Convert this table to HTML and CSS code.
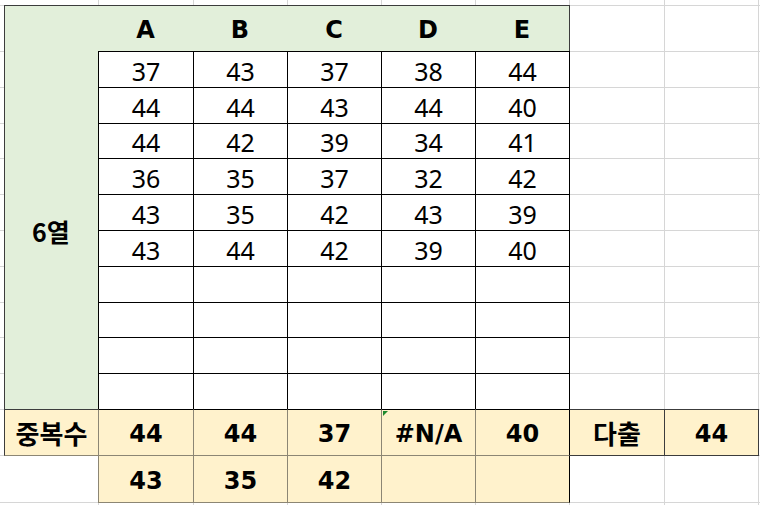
FILE: index.html
```html
<!DOCTYPE html>
<html lang="ko">
<head>
<meta charset="utf-8">
<title>6열 중복수</title>
<link rel="stylesheet" href="styles.css">
</head>
<body>
<div class="sheet">
  <div class="green"></div>
  <div class="colhead c-a">A</div>
  <div class="colhead c-b">B</div>
  <div class="colhead c-c">C</div>
  <div class="colhead c-d">D</div>
  <div class="colhead c-e">E</div>
  <div class="rowhead">6열</div>

  <div class="data">
    <div class="cell">37</div><div class="cell">43</div><div class="cell">37</div><div class="cell">38</div><div class="cell">44</div>
    <div class="cell">44</div><div class="cell">44</div><div class="cell">43</div><div class="cell">44</div><div class="cell">40</div>
    <div class="cell">44</div><div class="cell">42</div><div class="cell">39</div><div class="cell">34</div><div class="cell">41</div>
    <div class="cell">36</div><div class="cell">35</div><div class="cell">37</div><div class="cell">32</div><div class="cell">42</div>
    <div class="cell">43</div><div class="cell">35</div><div class="cell">42</div><div class="cell">43</div><div class="cell">39</div>
    <div class="cell">43</div><div class="cell">44</div><div class="cell">42</div><div class="cell">39</div><div class="cell">40</div>
    <div class="cell"></div><div class="cell"></div><div class="cell"></div><div class="cell"></div><div class="cell"></div>
    <div class="cell"></div><div class="cell"></div><div class="cell"></div><div class="cell"></div><div class="cell"></div>
    <div class="cell"></div><div class="cell"></div><div class="cell"></div><div class="cell"></div><div class="cell"></div>
    <div class="cell"></div><div class="cell"></div><div class="cell"></div><div class="cell"></div><div class="cell"></div>
  </div>

  <div class="sum sum-label">중복수</div>
  <div class="sum sum-val c-a">44</div>
  <div class="sum sum-val c-b">44</div>
  <div class="sum sum-val c-c">37</div>
  <div class="sum sum-val c-d sum-na">#N/A</div>
  <div class="sum sum-val c-e">40</div>
  <div class="sum sum-most">다출</div>
  <div class="sum sum-most-val">44</div>

  <div class="sum2 c-a">43</div>
  <div class="sum2 c-b">35</div>
  <div class="sum2 c-c">42</div>
  <div class="sum2 c-d"></div>
  <div class="sum2 c-e sum2-last"></div>
</div>
</body>
</html>
```

FILE: styles.css
```css
html, body {
  margin: 0;
  padding: 0;
  background: #fff;
}

.sheet {
  width: 760px;
  height: 505px;
  overflow: hidden;
  display: grid;
  grid-template-columns: 4px 94px 95px 94px 94px 94px 94px 95px 94px 1fr;
  grid-template-rows: 5px 46px 36px 36px 35px 36px 36px 36px 36px 35px 36px 36px 46px 47px 1fr;
  color: #000;
  font-family: "Noto Sans", "Noto Sans CJK KR", sans-serif;
  background-color: #fff;
  background-repeat: no-repeat;
  background-image:
    linear-gradient(#d6d6d6, #d6d6d6), linear-gradient(#d6d6d6, #d6d6d6),
    linear-gradient(#d6d6d6, #d6d6d6), linear-gradient(#d6d6d6, #d6d6d6),
    linear-gradient(#d6d6d6, #d6d6d6), linear-gradient(#d6d6d6, #d6d6d6),
    linear-gradient(#d6d6d6, #d6d6d6), linear-gradient(#d6d6d6, #d6d6d6),
    linear-gradient(#d6d6d6, #d6d6d6), linear-gradient(#d6d6d6, #d6d6d6),
    linear-gradient(#d6d6d6, #d6d6d6), linear-gradient(#d6d6d6, #d6d6d6),
    linear-gradient(#d6d6d6, #d6d6d6), linear-gradient(#d6d6d6, #d6d6d6),
    linear-gradient(#d6d6d6, #d6d6d6), linear-gradient(#d6d6d6, #d6d6d6),
    linear-gradient(#d6d6d6, #d6d6d6), linear-gradient(#d6d6d6, #d6d6d6),
    linear-gradient(#d6d6d6, #d6d6d6), linear-gradient(#d6d6d6, #d6d6d6),
    linear-gradient(#d6d6d6, #d6d6d6), linear-gradient(#d6d6d6, #d6d6d6);
  background-size:
    1px 100%, 1px 100%, 1px 100%, 1px 100%, 1px 100%, 1px 100%, 1px 100%, 1px 100%,
    100% 1px, 100% 1px, 100% 1px, 100% 1px, 100% 1px, 100% 1px, 100% 1px,
    100% 1px, 100% 1px, 100% 1px, 100% 1px, 100% 1px, 100% 1px, 100% 1px;
  background-position:
    98px 0, 193px 0, 287px 0, 381px 0, 475px 0, 569px 0, 664px 0, 758px 0,
    0 5px, 0 51px, 0 87px, 0 123px, 0 158px, 0 194px, 0 230px,
    0 266px, 0 302px, 0 337px, 0 373px, 0 409px, 0 455px, 0 502px;
}

/* column placement */
.c-a { grid-column: 3; }
.c-b { grid-column: 4; }
.c-c { grid-column: 5; }
.c-d { grid-column: 6; }
.c-e { grid-column: 7; }

/* green header block */
.green {
  grid-column: 2 / 8;
  grid-row: 2 / 13;
  background: #e2efda;
  border-top: 1px solid #3c3c3c;
  border-left: 1px solid #3c3c3c;
  border-right: 1px solid #3c3c3c;
  margin-right: -1px;
}

.colhead {
  grid-row: 2;
  display: flex;
  align-items: center;
  justify-content: center;
  padding-top: 3px;
  font-family: "DejaVu Sans", sans-serif;
  font-weight: bold;
  font-size: 24px;
}

.rowhead {
  grid-column: 2;
  grid-row: 3 / 13;
  display: flex;
  align-items: center;
  justify-content: center;
  padding-top: 2px;
  font-family: "Noto Sans CJK KR", sans-serif;
  font-weight: bold;
  font-size: 25px;
}

/* data table */
.data {
  grid-column: 3 / 8;
  grid-row: 3 / 13;
  display: grid;
  grid-template-columns: 95px 94px 94px 94px 94px;
  grid-template-rows: 36px 36px 35px 36px 36px 36px 36px 35px 36px 36px;
  border-right: 1px solid #000;
  margin-right: -1px;
}

.cell {
  background: #fff;
  border-left: 1px solid #000;
  border-top: 1px solid #000;
  display: flex;
  align-items: center;
  justify-content: center;
  padding-top: 3px;
  font-size: 25px;
  line-height: 1;
}

/* totals row */
.sum {
  grid-row: 13;
  background: #fff2cc;
  border-left: 1px solid #8c8674;
  border-top: 1px solid #000;
  display: flex;
  align-items: center;
  justify-content: center;
  padding-top: 3px;
  font-weight: bold;
  font-size: 24px;
  line-height: 1;
}

.sum-val {
  font-family: "DejaVu Sans", sans-serif;
}

.sum-label {
  grid-column: 2;
  border-left-color: #3c3c3c;
  border-top-color: #3c3c3c;
  border-bottom: 1px solid #8c8674;
  margin-bottom: -1px;
  font-family: "Noto Sans CJK KR", sans-serif;
  font-size: 26px;
  padding-top: 0;
}

.sum-na {
  position: relative;
}

.sum-na::before {
  content: "";
  position: absolute;
  left: 1px;
  top: 1px;
  border-top: 5px solid #1e8a2e;
  border-right: 5px solid transparent;
}

.sum-most {
  grid-column: 8;
  border-left-color: #000;
  border-top-color: #3c3c3c;
  border-bottom: 1px solid #3c3c3c;
  margin-bottom: -1px;
  font-family: "Noto Sans CJK KR", sans-serif;
  font-size: 26px;
  padding-top: 0;
}

.sum-most-val {
  grid-column: 9;
  border-left-color: #3c3c3c;
  border-top-color: #3c3c3c;
  border-bottom: 1px solid #3c3c3c;
  border-right: 1px solid #3c3c3c;
  margin-bottom: -1px;
  margin-right: -1px;
  font-family: "DejaVu Sans", sans-serif;
}

.sum2 {
  grid-row: 14;
  background: #fff2cc;
  border-left: 1px solid #8c8674;
  border-top: 1px solid #8c8674;
  border-bottom: 1px solid #8c8674;
  margin-bottom: -1px;
  display: flex;
  align-items: center;
  justify-content: center;
  padding-top: 3px;
  font-family: "DejaVu Sans", sans-serif;
  font-weight: bold;
  font-size: 24px;
  line-height: 1;
}

.sum2-last {
  border-right: 1px solid #000;
  margin-right: -1px;
}
```
